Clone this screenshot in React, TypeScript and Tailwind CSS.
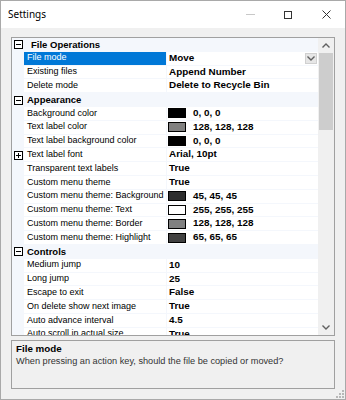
import React from 'react';

type Row =
  | { kind: 'cat'; label: string; indent?: boolean }
  | { kind: 'prop'; label: string; value: string; swatch?: string; expandable?: boolean; selected?: boolean; dropdown?: boolean };

const rows: Row[] = [
  { kind: 'cat', label: 'File Operations', indent: true },
  { kind: 'prop', label: 'File mode', value: 'Move', selected: true, dropdown: true },
  { kind: 'prop', label: 'Existing files', value: 'Append Number' },
  { kind: 'prop', label: 'Delete mode', value: 'Delete to Recycle Bin' },
  { kind: 'cat', label: 'Appearance' },
  { kind: 'prop', label: 'Background color', value: '0, 0, 0', swatch: '#000000' },
  { kind: 'prop', label: 'Text label color', value: '128, 128, 128', swatch: '#808080' },
  { kind: 'prop', label: 'Text label background color', value: '0, 0, 0', swatch: '#000000' },
  { kind: 'prop', label: 'Text label font', value: 'Arial, 10pt', expandable: true },
  { kind: 'prop', label: 'Transparent text labels', value: 'True' },
  { kind: 'prop', label: 'Custom menu theme', value: 'True' },
  { kind: 'prop', label: 'Custom menu theme: Background', value: '45, 45, 45', swatch: '#2d2d2d' },
  { kind: 'prop', label: 'Custom menu theme: Text', value: '255, 255, 255', swatch: '#ffffff' },
  { kind: 'prop', label: 'Custom menu theme: Border', value: '128, 128, 128', swatch: '#808080' },
  { kind: 'prop', label: 'Custom menu theme: Highlight', value: '65, 65, 65', swatch: '#414141' },
  { kind: 'cat', label: 'Controls' },
  { kind: 'prop', label: 'Medium jump', value: '10' },
  { kind: 'prop', label: 'Long jump', value: '25' },
  { kind: 'prop', label: 'Escape to exit', value: 'False' },
  { kind: 'prop', label: 'On delete show next image', value: 'True' },
  { kind: 'prop', label: 'Auto advance interval', value: '4.5' },
  { kind: 'prop', label: 'Auto scroll in actual size', value: 'True' },
];

const Box = ({ plus }: { plus?: boolean }) => (
  <svg width="9" height="9" viewBox="0 0 9 9" className="block">
    <rect x="0.5" y="0.5" width="8" height="8" fill="#fff" stroke="#000" />
    <line x1="2" y1="4.5" x2="7" y2="4.5" stroke="#000" />
    {plus && <line x1="4.5" y1="2" x2="4.5" y2="7" stroke="#000" />}
  </svg>
);

const Chevron = ({ up }: { up?: boolean }) => (
  <svg width="8" height="5" viewBox="0 0 8 5" className="block">
    <path d={up ? 'M0.5 4.5 L4 1 L7.5 4.5' : 'M0.5 0.5 L4 4 L7.5 0.5'} fill="none" stroke="#606060" strokeWidth="1.4" />
  </svg>
);

export default function App() {
  return (
    <div
      className="w-[346px] h-[400px] flex flex-col border border-[#a9a9a9] bg-[#f0f0f0] text-black"
      style={{ fontFamily: '"Liberation Sans", Arial, sans-serif' }}
    >
      {/* Title bar */}
      <div className="h-[27px] bg-white flex items-center shrink-0">
        <span className="pl-[7px] text-[10px] text-black" style={{ fontFamily: '"Noto Sans", "Open Sans", sans-serif' }}>
          Settings
        </span>
        <div className="ml-auto flex items-center h-full">
          <div className="w-[38px] flex justify-center">
            <div className="w-[9px] h-px bg-[#c8c8c8]" />
          </div>
          <div className="w-[38px] flex justify-center">
            <div className="w-[8px] h-[8px] border border-[#333]" />
          </div>
          <div className="w-[38px] flex justify-center">
            <svg width="9" height="9" viewBox="0 0 9 9">
              <path d="M0.5 0.5 L8.5 8.5 M8.5 0.5 L0.5 8.5" stroke="#333" strokeWidth="1" />
            </svg>
          </div>
        </div>
      </div>

      {/* Client */}
      <div className="flex-1 flex flex-col px-[10px] pt-[9px] pb-[10px] gap-[4px]">
        {/* Property grid */}
        <div className="h-[299px] border border-[#a0a0a0] bg-white flex overflow-hidden shrink-0">
          <div className="flex-1 flex flex-col overflow-hidden">
            {rows.map((r, i) =>
              r.kind === 'cat' ? (
                <div key={i} className="h-[13.8px] shrink-0 bg-[#f4f7fc] flex items-center text-[9.5px] font-bold">
                  <div className="w-[12px] flex justify-center pl-[1px]">
                    <Box />
                  </div>
                  <span className={r.indent ? 'pl-[7px]' : 'pl-[3px]'}>{r.label}</span>
                </div>
              ) : (
                <div key={i} className="h-[13.8px] shrink-0 flex text-[9px]">
                  <div className="w-[12px] bg-[#f4f7fc] flex items-center justify-center pl-[1px]">
                    {r.expandable && <Box plus />}
                  </div>
                  <div
                    className={`w-[142px] flex items-center pl-[3px] whitespace-nowrap overflow-hidden border-b border-[#f4f7fc] ${
                      r.selected ? 'bg-[#0078d7] text-white' : ''
                    }`}
                  >
                    {r.label}
                  </div>
                  <div className="w-px bg-[#f4f7fc]" />
                  <div className="flex-1 flex items-center pl-[1px] font-bold text-[9.9px] whitespace-nowrap border-b border-[#f4f7fc]">
                    {r.swatch && (
                      <div className="w-[18px] h-[10px] border border-black mr-[6px] shrink-0" style={{ background: r.swatch }} />
                    )}
                    <span className="pl-[1px]">{r.value}</span>
                    {r.dropdown && (
                      <div className="ml-auto mr-[1px] w-[12px] h-[11px] bg-[#e6e6e6] border border-[#d0d0d0] flex items-center justify-center">
                        <Chevron />
                      </div>
                    )}
                  </div>
                </div>
              )
            )}
          </div>
          {/* Scrollbar */}
          <div className="w-[16px] bg-[#f0f0f0] flex flex-col shrink-0">
            <div className="h-[15px] flex items-center justify-center">
              <Chevron up />
            </div>
            <div className="flex-1 px-[1px]">
              <div className="h-[77px] bg-[#cdcdcd]" />
            </div>
            <div className="h-[15px] flex items-center justify-center">
              <Chevron />
            </div>
          </div>
        </div>

        {/* Help box */}
        <div className="flex-1 border border-[#a0a0a0] bg-[#f0f0f0] px-[4px] pt-[1px] text-[9.2px] leading-[13px]">
          <div className="font-bold text-[9.8px]">File mode</div>
          <div className="text-[#333]">When pressing an action key, should the file be copied or moved?</div>
        </div>
      </div>

      {/* Resize grip */}
      <div className="relative h-0">
        <svg width="8" height="8" viewBox="0 0 8 8" className="absolute right-[1px] bottom-[1px]">
          {[
            [6, 0],
            [6, 3],
            [3, 3],
            [6, 6],
            [3, 6],
            [0, 6],
          ].map(([x, y], k) => (
            <rect key={k} x={x} y={y} width="2" height="2" fill="#b8b8b8" />
          ))}
        </svg>
      </div>
    </div>
  );
}
